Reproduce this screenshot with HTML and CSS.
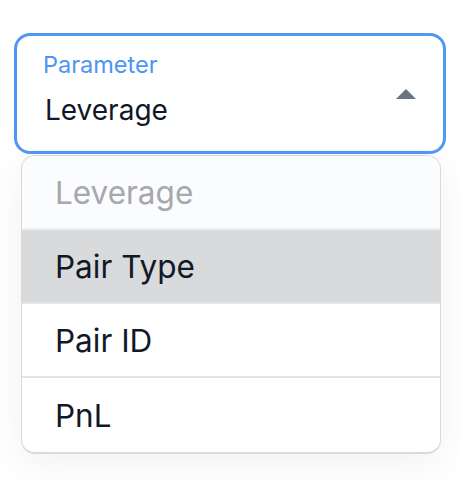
FILE: index.html
```html
<!DOCTYPE html>
<html>
<head>
<meta charset="utf-8">
<link rel="stylesheet" href="styles.css">
</head>
<body>
<div class="wrap">
  <div class="select">
    <div class="label">Parameter</div>
    <div class="value-row">
      <span class="value">Leverage</span>
      <svg class="arrow" width="20" height="10" viewBox="0 0 20 10"><polygon points="10,0 20,10 0,10" fill="#6b7280"/></svg>
    </div>
  </div>
  <div class="menu">
    <div class="item selected">Leverage</div>
    <div class="item hover">Pair Type</div>
    <div class="item">Pair ID</div>
    <div class="item last">PnL</div>
  </div>
</div>
</body>
</html>
```
FILE: styles.css
```css
html, body {
  margin: 0;
  padding: 0;
  background: #ffffff;
}
body {
  font-family: Inter, "Noto Sans", sans-serif;
  width: 460px;
  height: 480px;
  overflow: hidden;
}
.wrap {
  padding: 33px 14px 0 14px;
  display: flex;
  flex-direction: column;
}
.select {
  box-sizing: border-box;
  height: 121px;
  border: 3px solid #4f97f6;
  border-radius: 16px;
  background: #ffffff;
  padding: 16px 27px 0 26px;
  position: relative;
  z-index: 2;
}
.label {
  font-size: 23.5px;
  line-height: 26px;
  color: #4d94f4;
}
.value-row {
  display: flex;
  align-items: center;
  justify-content: space-between;
  margin-top: 16px;
}
.value {
  font-size: 28px;
  line-height: 32px;
  color: #111827;
  margin-left: 2px;
}
.arrow {
  display: block;
  margin-top: -32px;
}
.menu {
  margin: 1px 5px 0 7px;
  border: 1px solid #d9d9d9;
  border-bottom-width: 2px;
  border-radius: 14px;
  overflow: hidden;
  background: #ffffff;
  box-shadow: 0 10px 40px rgba(0, 0, 0, 0.06);
}
.item {
  box-sizing: border-box;
  height: 74px;
  display: flex;
  align-items: center;
  padding-left: 33px;
  font-size: 31.5px;
  color: #111827;
  border-bottom: 2px solid #e4e4e6;
}
.item.last {
  border-bottom: none;
}
.item.selected {
  background: #fbfcfe;
  color: #a6a8ac;
  border-bottom-color: #eef0f2;
}
.item.hover {
  background: #d9dadc;
}
```
